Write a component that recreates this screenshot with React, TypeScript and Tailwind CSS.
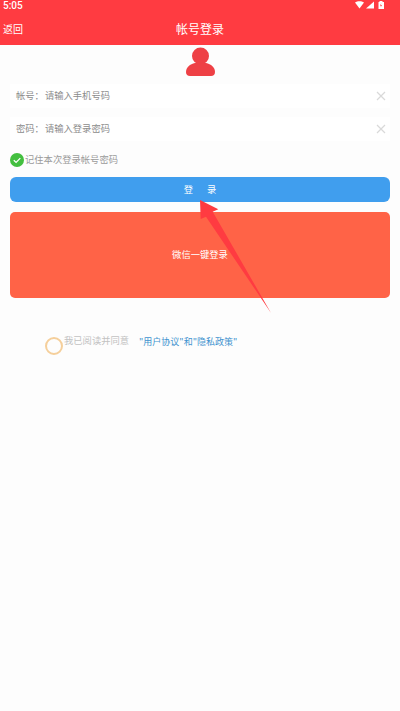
const font = "font-['Noto_Sans_CJK_SC','Noto_Sans',sans-serif]";

const LoginField = ({ label, placeholder }: { label: string; placeholder: string }) => (
  <div className="h-[24px] bg-white flex items-center justify-between pl-[6px] pr-[3px] text-[9.3px] text-[#8c8c8c]">
    <span className="leading-none">
      {label}：<span className="ml-[1px]">{placeholder}</span>
    </span>
    <svg width="12" height="12" viewBox="0 0 12 12" fill="none" stroke="#d9d9d9" strokeWidth="1.2">
      <path d="M2 2l8 8M10 2l-8 8" />
    </svg>
  </div>
);

export default function App() {
  return (
    <div className={`${font} relative w-[400px] h-[711px] bg-[#fdfdfd] overflow-hidden`}>
      {/* status bar + title */}
      <div className="h-[45px] bg-[#ff3b41] text-white">
        <div className="h-[11px] flex items-center justify-between pl-[3px] pr-[15px] pt-[1px]">
          <span className="font-['Roboto',sans-serif] text-[10px] leading-none font-medium">5:05</span>
          <svg width="30" height="10" viewBox="0 0 30 10" fill="white">
            <path d="M0 1.500C2.500-.2 6.500-.2 9 1.500L4.500 7.500z" />
            <path d="M11 7.500L19 .5v7z" />
            <path d="M23.500 1h1V0h3v1h1.500v7h-5.500z" />
            <path d="M26.200 2.300l-1.200 2.500h1l-.4 1.700 1.400-2.600h-1z" fill="#ff3b41" />
          </svg>
        </div>
        <div className="relative h-[34px] flex items-center justify-center">
          <span className="absolute left-[3px] top-[11px] text-[10px] leading-[14px]">返回</span>
          <span className="text-[12px] leading-none pt-[1px]">帐号登录</span>
        </div>
      </div>

      <div className="flex justify-center pt-[2px]">
        <svg width="29" height="29" viewBox="0 0 29 29" fill="#ee4045">
          <circle cx="14.500" cy="9" r="8.500" />
          <path d="M9 16h11c5 1 9 4.500 9 9 0 2.500-1.500 4-4 4H4c-2.500 0-4-1.500-4-4 0-4.500 4-8 9-9z" />
        </svg>
      </div>

      <div className="px-[10px] pt-[8px]">
        <div className="flex flex-col gap-[9px]">
          <LoginField label="帐号" placeholder="请输入手机号码" />
          <LoginField label="密码" placeholder="请输入登录密码" />
        </div>

        <div className="flex items-center h-[14px] mt-[12px] text-[9.3px] text-[#9a9a9a]">
          <svg width="14" height="14" viewBox="0 0 14 14">
            <circle cx="7" cy="7" r="7" fill="#43bf3f" />
            <path d="M3.800 7.200l2.300 2.200 4.200-4.300" fill="none" stroke="white" strokeWidth="1.300" />
          </svg>
          <span className="ml-[1px] leading-none">记住本次登录帐号密码</span>
        </div>

        <div className="mt-[10px] h-[25px] bg-[#409eee] rounded-[6px] flex items-center justify-center text-white text-[9.3px] gap-[14px]">
          <span>登</span>
          <span>录</span>
        </div>

        <div className="mt-[10px] h-[86px] bg-[#ff6347] rounded-[5px] flex items-center justify-center text-white text-[9.3px]">
          微信一键登录
        </div>

        <div className="flex items-center mt-[36px] pl-[35px] text-[9px] leading-none">
          <span className="w-[18px] h-[18px] rounded-full border-[2px] border-[#f5cf9b] mt-[3px]" />
          <span className="ml-[1px] text-[#c2c2c2] text-[9.3px] -mt-[7px]">我已阅读并同意</span>
          <span className="ml-[10px] text-[#3f93cf] -mt-[7px]">"用户协议"和"隐私政策"</span>
        </div>
      </div>

      {/* arrow annotation on top of the buttons */}
      <svg className="absolute left-0 top-0 pointer-events-none" width="400" height="711" viewBox="0 0 400 711">
        <path d="M200 200L218.300 209.300L212.700 211.700L271 313L206 216.700L200.700 219z" fill="#ff3b41" />
      </svg>
    </div>
  );
}
